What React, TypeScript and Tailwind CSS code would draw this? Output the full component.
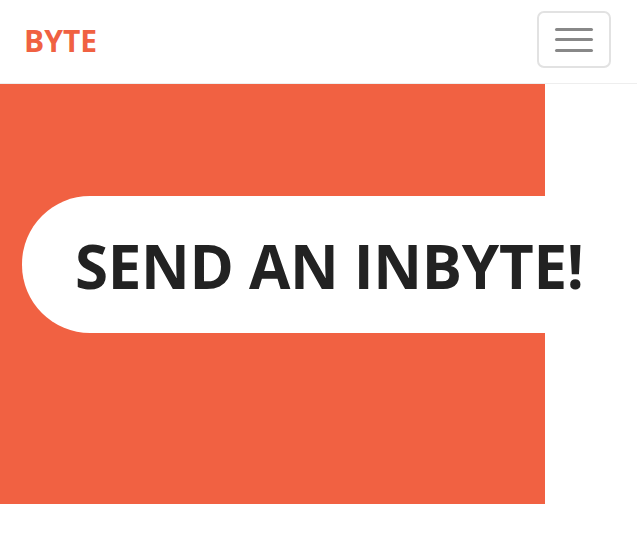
export default function App() {
  return (
    <div className="w-[637px] h-[547px] bg-white overflow-hidden" style={{ fontFamily: '"Open Sans", sans-serif' }}>
      <nav className="h-[84px] border-b border-[#eeeeee] flex items-center justify-between pl-[24px] pr-[26px]">
        <span className="text-[30px] font-bold text-[#f06142] tracking-[0px] leading-none mt-[-2px]">BYTE</span>
        <button className="w-[74px] h-[57px] border-2 border-[#e2e2e2] rounded-[7px] flex flex-col items-center justify-center gap-[7.5px] mt-[-4px]">
          <span className="block w-[38px] h-[3px] bg-[#888888] rounded-full" />
          <span className="block w-[38px] h-[3px] bg-[#888888] rounded-full" />
          <span className="block w-[38px] h-[3px] bg-[#888888] rounded-full" />
        </button>
      </nav>
      <section className="w-[545px] h-[420px] bg-[#f16142] pt-[112px]">
        <div className="ml-[22px] w-[615px] h-[137px] bg-white rounded-l-[68px] flex items-center pl-[53px]">
          <h1 className="text-[60px] font-bold text-[#222222] leading-none whitespace-nowrap tracking-[-0.3px] mt-[2px]">SEND AN INBYTE!</h1>
        </div>
      </section>
    </div>
  );
}
